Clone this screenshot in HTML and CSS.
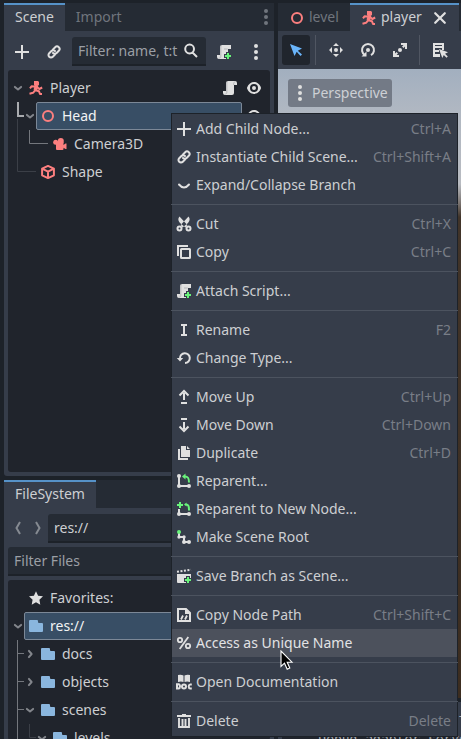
FILE: index.html
```
<!DOCTYPE html>
<html lang="en">
<head>
<meta charset="utf-8">
<title>Scene editor</title>
<link rel="stylesheet" href="styles.css">
</head>
<body>
<svg class="defs" width="0" height="0">
  <symbol id="add" viewBox="0 0 16 16"><path d="M7 1v6H1v2h6v6h2V9h6V7H9V1z"/></symbol>
  <symbol id="link" viewBox="0 0 16 16"><g fill="none" stroke="currentColor" stroke-width="2" stroke-linecap="round"><path d="M7 5.400l2.200-2.200a2.500 2.500 0 0 1 3.600 3.600l-2.200 2.200a2.500 2.500 0 0 1-3.600 0"/><path d="M9 10.600l-2.200 2.200a2.500 2.500 0 0 1-3.600-3.600l2.200-2.200a2.500 2.500 0 0 1 3.600 0"/></g></symbol>
  <symbol id="search" viewBox="0 0 16 16"><path d="M9.500 9.500L14 14M11 6a4.400 4.400 0 1 1-8.800 0a4.400 4.400 0 1 1 8.800 0z" fill="none" stroke="currentColor" stroke-width="2"/></symbol>
  <symbol id="script" viewBox="0 0 16 16"><path d="M6 1a2 2 0 0 0-2 2v8H1v2a2 2 0 0 0 2 2h7a2 2 0 0 0 2-2V5h3V3a2 2 0 0 0-2-2z"/><path d="M6 1.500c-.8 0-1.200.7-1.200 1.500v9.500c0 1-.8 1.600-1.500 1.600M13 2c-1 0-1.300.5-1.300 1.300V5" fill="none" stroke="#a9abae" stroke-width=".8"/></symbol>
  <symbol id="script-add" viewBox="0 0 16 16"><path d="M6 1a2 2 0 0 0-2 2v8H1v2a2 2 0 0 0 2 2h7V9h2V5h3V1z"/><path d="M6 1.500c-.8 0-1.200.7-1.200 1.500v9.500c0 1-.8 1.600-1.500 1.600M11.700 5H8" fill="none" stroke="#a9abae" stroke-width=".8"/><path d="M10 8h4v2h2v4h-2v2h-4v-2H8v-4h2z" fill="#363d4a"/><path d="M11 9h2v2h2v2h-2v2h-2v-2H9v-2h2z" fill="#69f57b"/></symbol>
  <symbol id="dots" viewBox="0 0 16 16"><circle cx="8" cy="2" r="2"/><circle cx="8" cy="8" r="2"/><circle cx="8" cy="14" r="2"/></symbol>
  <symbol id="eye" viewBox="0 0 16 16"><path fill-rule="evenodd" d="M8 2C5.400 2 2.200 3.900 1 7.700v.6C2.200 12.200 5.500 14 8 14s5.800-1.800 7-5.700v-.6C13.900 3.900 10.600 2 8 2zm0 2a4 4 0 1 1 0 8 4 4 0 0 1 0-8zm0 2a2 2 0 1 0 0 4 2 2 0 0 0 0-4z"/></symbol>
  <symbol id="body" viewBox="0 0 16 16"><path d="M6 1h4l1 1v3L9.500 6H7L6 5z"/><path d="M8.500 5.500L7.300 10.300" stroke="currentColor" stroke-width="3.600"/><path d="M8 6.800L3.500 6.300L2 8.300M9 7l2.300 2L14.200 7.500M7.500 10L5 12.800L1.500 13.800M7.500 10.300L11 11.300L12 14H14" fill="none" stroke="currentColor" stroke-width="2" stroke-linejoin="round"/></symbol>
  <symbol id="ring" viewBox="0 0 16 16"><circle cx="8" cy="8" r="5" fill="none" stroke="currentColor" stroke-width="2"/></symbol>
  <symbol id="camera" viewBox="0 0 16 16"><circle cx="8.800" cy="5" r="3"/><circle cx="3.700" cy="6.300" r="2.500"/><path d="M3 6H11.500v3l2-1.500h1v5.500h-1l-2-1.300v1.300a1 1 0 0 1-1 1H5a1 1 0 0 1-1-1V8z"/></symbol>
  <symbol id="cube" viewBox="0 0 16 16"><path d="M8 1.900L13.900 4.700v6.600L8 14.100L2.100 11.300V4.700zM2.100 4.700L8 7.700L13.900 4.700M8 7.700V14" fill="none" stroke="currentColor" stroke-width="2" stroke-linejoin="round"/></symbol>
  <symbol id="down" viewBox="0 0 16 16"><path d="M4.900 6.900L8 9.500L11.100 6.900" fill="none" stroke="currentColor" stroke-width="2" stroke-linecap="round" stroke-linejoin="round"/></symbol>
  <symbol id="right" viewBox="0 0 16 16"><path d="M6.900 4.900L9.600 8L6.900 11.100" fill="none" stroke="currentColor" stroke-width="2" stroke-linecap="round" stroke-linejoin="round"/></symbol>
  <symbol id="expand" viewBox="0 0 16 16"><path d="M3 7.500Q8 13.500 13 7.500" fill="none" stroke="currentColor" stroke-width="2" stroke-linecap="round"/></symbol>
  <symbol id="cut" viewBox="0 0 16 16"><path d="M3.500 .5C1.500 3 2.500 5 4 7L9.500 11.500l1.800-2.500zM12.500 .5c2 2.500 1 4.500-.5 6.500L6.500 11.500L4.700 9z"/><g fill="none" stroke="currentColor" stroke-width="2"><circle cx="3.500" cy="12.500" r="2"/><circle cx="12.500" cy="12.500" r="2"/></g></symbol>
  <symbol id="copy" viewBox="0 0 16 16"><path d="M2 12V2H12" fill="none" stroke="currentColor" stroke-width="2"/><rect x="5" y="5" width="9" height="9" rx=".5" fill="none" stroke="currentColor" stroke-width="2"/></symbol>
  <symbol id="rename" viewBox="0 0 16 16"><path d="M5 2h6v2H9v8h2v2H5v-2h2V4H5z"/></symbol>
  <symbol id="reload" viewBox="0 0 16 16"><path d="M4 8.500A4.900 4.900 0 1 1 9 13" fill="none" stroke="currentColor" stroke-width="2"/><path d="M.8 8H7.200L4 11.500z"/></symbol>
  <symbol id="up-arrow" viewBox="0 0 16 16"><path d="M7 4h2v7H7zM5 13h6v2H5z"/><path d="M3.500 6.500L8 2L12.500 6.500" fill="none" stroke="currentColor" stroke-width="2"/></symbol>
  <symbol id="down-arrow" viewBox="0 0 16 16"><path d="M5 1h6v2H5zM7 5h2v7H7z"/><path d="M3.500 9.500L8 14L12.500 9.500" fill="none" stroke="currentColor" stroke-width="2"/></symbol>
  <symbol id="duplicate" viewBox="0 0 16 16"><path d="M5 1h5v4h4v7H5zM11 1l3 3h-3zM2 4h2v9h8v2H2z"/></symbol>
  <symbol id="reparent" viewBox="0 0 16 16"><path d="M3 3v10H13" fill="none" stroke="currentColor" stroke-width="2"/><circle cx="3" cy="3" r="2"/><circle cx="3" cy="13" r="2"/><circle cx="13" cy="13" r="2"/><path d="M9 3.500c3 0 4 1.500 4 6" fill="none" stroke="#69f57b" stroke-width="2"/><path d="M6 3.500L9.500 .5v6z" fill="#69f57b"/></symbol>
  <symbol id="reparent-new" viewBox="0 0 16 16"><path d="M3 8v5h10" fill="none" stroke="currentColor" stroke-width="2"/><circle cx="3" cy="13" r="2"/><circle cx="13" cy="13" r="2"/><path d="M3 1h2v2h2v2H5v2H3V5H1V3h2z" fill="#69f57b"/><path d="M10 3.500c2.500 0 3 1.500 3 6" fill="none" stroke="#69f57b" stroke-width="2"/><path d="M8 3.500L10.500 1.500v4z" fill="#69f57b"/></symbol>
  <symbol id="root" viewBox="0 0 16 16"><path d="M3 3v5h5v5h5" fill="none" stroke="currentColor" stroke-width="2"/><circle cx="3" cy="8" r="1.700"/><circle cx="8" cy="8" r="1.700"/><circle cx="8" cy="13" r="2"/><circle cx="13" cy="13" r="2"/><circle cx="3" cy="3" r="2" fill="#69f57b"/></symbol>
  <symbol id="save-branch" viewBox="0 0 16 16"><path d="M1 6h14v9H2a1 1 0 0 1-1-1z"/><path d="M1 3.800L15 1.800" fill="none" stroke="currentColor" stroke-width="2" stroke-dasharray="2 1.500"/><path d="M10 8h4v2h2v6H10v-2H8v-4h2z" fill="#363d4a"/><path d="M11 9h2v2h2v2h-2v2h-2v-2H9v-2h2z" fill="#69f57b"/></symbol>
  <symbol id="node-path" viewBox="0 0 16 16"><path d="M2 2h8l4 4v8H2z" fill="none" stroke="currentColor" stroke-width="2"/><path d="M5 12.500l2-4M9 12.500l2-4" stroke="currentColor" stroke-width="1.800"/><path d="M9 2h1l4 4v1H9z"/></symbol>
  <symbol id="percent" viewBox="0 0 16 16"><g fill="none" stroke="currentColor" stroke-width="1.800"><circle cx="4" cy="5" r="2.200"/><circle cx="12" cy="11" r="2.200"/><path d="M12.300 2L3.700 14"/></g></symbol>
  <symbol id="docs" viewBox="0 0 16 16"><path d="M2 1q3-.8 5.500 .5v6.500Q5 7 2 8zM14 1q-3-.8-5.500 .5v6.500Q11 7 14 8z"/><g fill="none" stroke="currentColor" stroke-width="2"><path d="M1 10.300h1.500q1.500.2 1.500 2.200q0 1.800-1.500 2H1z"/><circle cx="8" cy="12.500" r="2"/><path d="M15.800 10.500h-1.500q-1.600.3-1.600 2t1.600 2h1.500"/></g></symbol>
  <symbol id="trash" viewBox="0 0 16 16"><path d="M6 1h4v1h5v2H1V2h5z"/><path d="M3 5V14h10V5M6.500 6v7M9.500 6v7" fill="none" stroke="currentColor" stroke-width="1.900"/></symbol>
  <symbol id="folder" viewBox="0 0 16 16"><path d="M2 2a1 1 0 0 0-1 1v10a1 1 0 0 0 1 1h12a1 1 0 0 0 1-1V6a1 1 0 0 0-1-1h-3a1 1 0 0 1-1-1V3a1 1 0 0 0-1-1z"/></symbol>
  <symbol id="star" viewBox="0 0 16 16"><path d="M8 1.200L10.100 5.700L15 6.300L11.400 9.700L12.300 14.700L8 12.300L3.700 14.700L4.600 9.700L1 6.300L5.900 5.700z"/></symbol>
  <symbol id="close" viewBox="0 0 16 16"><path d="M3.200 3.200l9.600 9.600M12.800 3.200L3.200 12.800" stroke="currentColor" stroke-width="2.200" stroke-linecap="round"/></symbol>
  <symbol id="select" viewBox="0 0 16 16"><path d="M2 2L14 6.500L9.800 8.700L14 12.500L12.500 14L8.700 9.800L6.500 14z"/></symbol>
  <symbol id="move" viewBox="0 0 16 16"><circle cx="8" cy="8" r="2"/><path d="M8 1l3 3H5zM8 15l3-3H5zM1 8l3-3v6zM15 8l-3-3v6z"/></symbol>
  <symbol id="rotate" viewBox="0 0 16 16"><circle cx="8" cy="8" r="2"/><path d="M5 13.200A6 6 0 1 1 11 13.200" fill="none" stroke="currentColor" stroke-width="2"/><path d="M1.500 14.500h5v-5z"/></symbol>
  <symbol id="scale" viewBox="0 0 16 16"><circle cx="8" cy="8" r="2"/><path d="M9 1h6v6h-2V4.500L11.500 6L10 4.500L11.500 3H9zM7 15H1V9h2v2.500L4.500 10L6 11.500L4.500 13H7z"/></symbol>
  <symbol id="list-select" viewBox="0 0 16 16"><path d="M1 1h11v7h-2V6H3v2h4v2H3v2h5v3H1zM3 3v1h7V3z" fill-rule="evenodd"/><path d="M7 7l9 3.300l-3 1.500l2.800 2.700l-1.300 1.300l-2.700-2.800L10.300 16z"/></symbol>
</svg>

<div class="editor">
  <div class="left">
    <section class="dock scene">
      <div class="tabs"><div class="tab active">Scene</div><div class="tab">Import</div><svg class="icon more"><use href="#dots"/></svg></div>
      <div class="tools">
        <svg class="icon"><use href="#add"/></svg>
        <svg class="icon"><use href="#link"/></svg>
        <div class="field search"><span>Filter: name, t:t</span><svg class="icon"><use href="#search"/></svg></div>
        <svg class="icon"><use href="#script-add"/></svg>
        <svg class="icon"><use href="#dots"/></svg>
      </div>
      <div class="tree">
        <svg class="guides" width="60" height="110"><path d="M9.500 49v52.500H28" stroke="#3b3f47"/><path d="M21.500 60v13.500H40" stroke="#74777d"/><path d="M10 32v14H16" stroke="#a9abaf" stroke-width="2"/></svg>
        <div class="row"><svg class="icon fold"><use href="#down"/></svg><div class="cell red"><svg class="icon"><use href="#body"/></svg><span>Player</span></div><svg class="icon"><use href="#script"/></svg><svg class="icon"><use href="#eye"/></svg></div>
        <div class="row l1"><svg class="icon fold"><use href="#down"/></svg><div class="cell red selected"><svg class="icon"><use href="#ring"/></svg><span>Head</span></div><svg class="icon"><use href="#eye"/></svg></div>
        <div class="row l2"><i class="fold"></i><div class="cell red"><svg class="icon"><use href="#camera"/></svg><span>Camera3D</span></div></div>
        <div class="row l1"><i class="fold"></i><div class="cell red"><svg class="icon"><use href="#cube"/></svg><span>Shape</span></div></div>
      </div>
    </section>
    <section class="dock files">
      <div class="tabs"><div class="tab active">FileSystem</div></div>
      <div class="path">
        <svg class="nav" viewBox="0 0 40 16"><path d="M12 2L8.500 8l3.500 6M28 2l3.500 6l-3.500 6" fill="none" stroke="#858a91" stroke-width="2"/></svg>
        <div class="field">res://</div>
      </div>
      <div class="field filter">Filter Files</div>
      <div class="tree">
        <svg class="guides" width="60" height="160"><path d="M9.500 60v100M9.500 73.500H16M9.500 101.500H16M9.500 129.500H16" stroke="#74777d"/><path d="M21.500 144v13.500H28" stroke="#3b3f47"/></svg>
        <div class="row"><i class="fold"></i><div class="cell"><svg class="icon"><use href="#star"/></svg><span>Favorites:</span></div></div>
        <div class="row"><svg class="icon fold"><use href="#down"/></svg><div class="cell blue selected"><svg class="icon"><use href="#folder"/></svg><span>res://</span></div></div>
        <div class="row l1"><svg class="icon fold"><use href="#right"/></svg><div class="cell blue"><svg class="icon"><use href="#folder"/></svg><span>docs</span></div></div>
        <div class="row l1"><svg class="icon fold"><use href="#right"/></svg><div class="cell blue"><svg class="icon"><use href="#folder"/></svg><span>objects</span></div></div>
        <div class="row l1"><svg class="icon fold"><use href="#down"/></svg><div class="cell blue"><svg class="icon"><use href="#folder"/></svg><span>scenes</span></div></div>
        <div class="row l2"><svg class="icon fold"><use href="#down"/></svg><div class="cell blue"><svg class="icon"><use href="#folder"/></svg><span>levels</span></div></div>
      </div>
    </section>
  </div>
  <main class="main">
    <div class="tabs scenes">
      <div class="tab"><svg class="icon red-icon"><use href="#ring"/></svg>level</div>
      <div class="tab active"><svg class="icon red-icon"><use href="#body"/></svg>player<svg class="icon shut"><use href="#close"/></svg></div>
    </div>
    <div class="toolbar">
      <div class="tool on"><svg class="icon"><use href="#select"/></svg></div><i class="bar"></i>
      <div class="tool"><svg class="icon"><use href="#move"/></svg></div>
      <div class="tool"><svg class="icon"><use href="#rotate"/></svg></div>
      <div class="tool"><svg class="icon"><use href="#scale"/></svg></div><i class="bar"></i>
      <div class="tool"><svg class="icon"><use href="#list-select"/></svg></div>
    </div>
    <div class="viewport"><div class="perspective"><svg class="icon"><use href="#dots"/></svg>Perspective</div></div>
    <div class="output"><div class="log"><p class="tail">T</p><p>--- Debug adapter server</p></div></div>
  </main>
</div>

<div class="menu">
  <div class="item"><svg class="icon"><use href="#add"/></svg><span>Add Child Node...</span><kbd>Ctrl+A</kbd></div>
  <div class="item"><svg class="icon"><use href="#link"/></svg><span>Instantiate Child Scene...</span><kbd>Ctrl+Shift+A</kbd></div>
  <div class="item"><svg class="icon"><use href="#expand"/></svg><span>Expand/Collapse Branch</span></div>
  <div class="sep"></div>
  <div class="item"><svg class="icon"><use href="#cut"/></svg><span>Cut</span><kbd>Ctrl+X</kbd></div>
  <div class="item"><svg class="icon"><use href="#copy"/></svg><span>Copy</span><kbd>Ctrl+C</kbd></div>
  <div class="sep"></div>
  <div class="item"><svg class="icon"><use href="#script-add"/></svg><span>Attach Script...</span></div>
  <div class="sep"></div>
  <div class="item"><svg class="icon"><use href="#rename"/></svg><span>Rename</span><kbd>F2</kbd></div>
  <div class="item"><svg class="icon"><use href="#reload"/></svg><span>Change Type...</span></div>
  <div class="sep"></div>
  <div class="item"><svg class="icon"><use href="#up-arrow"/></svg><span>Move Up</span><kbd>Ctrl+Up</kbd></div>
  <div class="item"><svg class="icon"><use href="#down-arrow"/></svg><span>Move Down</span><kbd>Ctrl+Down</kbd></div>
  <div class="item"><svg class="icon"><use href="#duplicate"/></svg><span>Duplicate</span><kbd>Ctrl+D</kbd></div>
  <div class="item"><svg class="icon"><use href="#reparent"/></svg><span>Reparent...</span></div>
  <div class="item"><svg class="icon"><use href="#reparent-new"/></svg><span>Reparent to New Node...</span></div>
  <div class="item"><svg class="icon"><use href="#root"/></svg><span>Make Scene Root</span></div>
  <div class="sep"></div>
  <div class="item"><svg class="icon"><use href="#save-branch"/></svg><span>Save Branch as Scene...</span></div>
  <div class="sep"></div>
  <div class="item"><svg class="icon"><use href="#node-path"/></svg><span>Copy Node Path</span><kbd>Ctrl+Shift+C</kbd></div>
  <div class="item hover"><svg class="icon"><use href="#percent"/></svg><span>Access as Unique Name</span></div>
  <div class="sep"></div>
  <div class="item"><svg class="icon"><use href="#docs"/></svg><span>Open Documentation</span></div>
  <div class="sep"></div>
  <div class="item"><svg class="icon"><use href="#trash"/></svg><span>Delete</span><kbd>Delete</kbd></div>
</div>
<svg class="pointer" width="14" height="21" viewBox="0 0 14 21"><path d="M1 1v15.500l3.500-3.300l2.700 6l2.600-1.200L7.200 12.200H12z" fill="#000" stroke="#fff" stroke-width="1.100"/></svg>
</body>
</html>
```
FILE: styles.css
```
* { box-sizing: border-box; }
body {
  margin: 0;
  width: 461px;
  height: 739px;
  overflow: hidden;
  position: relative;
  background: #1d2229;
  color: #cdcfd2;
  font: 14px/20px "Noto Sans", sans-serif;
  white-space: nowrap;
}
.defs { position: absolute; }
.icon { width: 16px; height: 16px; flex: none; color: #e0e0e0; fill: currentColor; display: block; }
.editor { display: flex; gap: 4px; padding: 3px 0 0 4px; height: 739px; overflow: hidden; }
.left { width: 270px; flex: none; display: flex; flex-direction: column; gap: 4px; }
.dock { background: #363d4a; border-radius: 0 0 3px 3px; display: flex; flex-direction: column; flex: none; }
.scene { height: 473px; }
.files { height: 300px; }
.tabs { display: flex; height: 28px; flex: none; background: #252b34; }
.tab { padding: 4px 11px 0; color: #70757d; display: flex; }
.tab.active { background: #363d4a; color: #cdcfd2; border-top: 2px solid #5692c8; padding-top: 2px; }
.more { margin: 6px 0 0 auto; color: #70757d; }
.tools { display: flex; align-items: center; height: 39px; padding: 2px 10px 0; gap: 16px; }
.field { background: #252b34; border-bottom: 2px solid #1d2229; border-radius: 3px 3px 0 0; height: 29px; padding: 4px 6px 3px; }
.search { width: 134px; flex: none; display: flex; gap: 4px; color: #9b9fa5; margin: 0 -6px; }
.search span { width: 101px; overflow: hidden; }
.search .icon { margin-top: 2px; }
.scene .tree { height: 402px; }
.tree { position: relative; margin: 0 4px; padding: 4px 8px 0 2px; background: #20242c; border-radius: 3px; }
.guides { position: absolute; left: 0; top: 0; fill: none; }
.row { display: flex; align-items: center; height: 28px; gap: 8px; position: relative; }
.l1 { padding-left: 12px; }
.l2 { padding-left: 24px; }
.row .fold { width: 16px; flex: none; color: #83868c; margin-right: -10px; }
.row .cell { flex: 1; display: flex; align-items: center; gap: 6px; height: 28px; padding-left: 4px; border-radius: 2px; }
.cell.red .icon, .red-icon { color: #fc7f7f; }
.cell.blue .icon { color: #8ab6de; }
.cell.selected { background: #384e65; border: 1px solid #7c8897; padding-left: 3px; color: #f2f3f4; }
.scene .selected { margin-right: -4px; }
.files .tree { height: 160px; }
.path { display: flex; height: 39px; padding: 6px 4px 0; }
.path .nav { width: 40px; height: 16px; margin-top: 6px; }
.path .field { flex: 1; }
.filter { margin: 0 4px 4px; color: #9b9fa5; flex: none; }
.main { width: 183px; flex: none; display: flex; flex-direction: column; }
.scenes .tab { width: 72px; gap: 4px; padding-left: 11px; padding-right: 0; }
.scenes .tab.active { width: 109px; }
.scenes .icon { margin-top: 3px; }
.scenes .shut { margin-left: 6px; }
.toolbar { height: 38px; background: #363d4a; display: flex; gap: 4px; padding: 4px; flex: none; }
.tool { width: 28px; height: 30px; flex: none; display: flex; align-items: center; justify-content: center; border-radius: 3px; }
.tool.on { background: #20252d; }
.tool.on .icon { color: #6ab5fb; }
.bar { width: 1px; flex: none; background: #505662; margin: 0 2px 0 1px; }
.viewport {
  height: 629px;
  flex: none;
  padding: 10px;
  background: linear-gradient(#a2afbf 0, #b1b8c2 45px, #b8bbc1 115px, #77706c 135px, #413429 148px, #3c2d20 100%);
}
.perspective { width: 104px; height: 28px; display: flex; gap: 4px; align-items: center; padding-left: 4px; border-radius: 3px; background: #737a86; color: #cdd0d5; }
.output { height: 50px; margin-top: 4px; background: #363d4a; padding-top: 5px; flex: none; }
.log { margin: 0 4px; height: 40px; background: #20242c; font: 13px/18px "DejaVu Sans Mono", monospace; color: #a8abb0; padding: 5px 0 0 5px; }
.log p { margin: 0; }
.log .tail { padding-left: 172px; }
.menu { position: absolute; left: 171px; top: 113px; width: 287px; height: 624px; padding: 1px 0; background: #363d4a; border: 1px solid #1d2229; }
.item { display: flex; align-items: center; gap: 4px; height: 28px; padding: 0 6px 0 4px; }
.item kbd { margin-left: auto; font: inherit; color: #797e87; }
.item.hover { background: #4c515c; color: #e2e3e5; }
.sep { height: 11px; margin: 0 -1px; padding-top: 5px; }
.sep::before { content: ""; display: block; height: 1px; background: #4c535f; }
.pointer { position: absolute; left: 280px; top: 650px; }
```
